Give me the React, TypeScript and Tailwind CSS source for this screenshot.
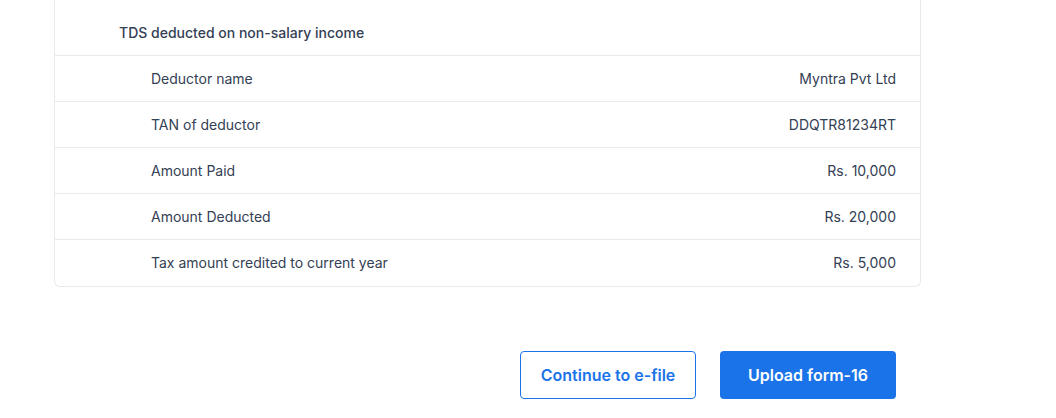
import React from "react";

const rows = [
  ["Deductor name", "Myntra Pvt Ltd"],
  ["TAN of deductor", "DDQTR81234RT"],
  ["Amount Paid", "Rs. 10,000"],
  ["Amount Deducted", "Rs. 20,000"],
  ["Tax amount credited to current year", "Rs. 5,000"],
];

export default function App() {
  return (
    <div className="w-[1056px] h-[418px] bg-white overflow-hidden text-[#344054]" style={{ fontFamily: "Inter, 'Noto Sans', sans-serif" }}>
      <div className="ml-[54px] w-[867px] border-x border-b border-[#e9eaec] rounded-b-[6px] pb-px">
        <div className="h-[55px] flex items-center pl-[64px] pt-[22px] pb-[12px] text-[14px] font-medium leading-[20px]">
          TDS deducted on non-salary income
        </div>
        {rows.map(([l, v]) => (
          <div key={l} className="h-[46px] border-t border-[#e9eaec] flex items-center justify-between pl-[96px] pr-6 text-[14px] leading-[20px]">
            <span>{l}</span>
            <span>{v}</span>
          </div>
        ))}
      </div>
      <div className="ml-[54px] w-[867px] mt-[64px] flex justify-end gap-6 pr-[25px]">
        <button className="w-[176px] h-[48px] rounded-[4px] border border-[#1a73e8] text-[#1a73e8] text-[16px] font-semibold bg-white">
          Continue to e-file
        </button>
        <button className="w-[176px] h-[48px] rounded-[4px] bg-[#1a73e8] text-white text-[16px] font-semibold">
          Upload form-16
        </button>
      </div>
    </div>
  );
}
